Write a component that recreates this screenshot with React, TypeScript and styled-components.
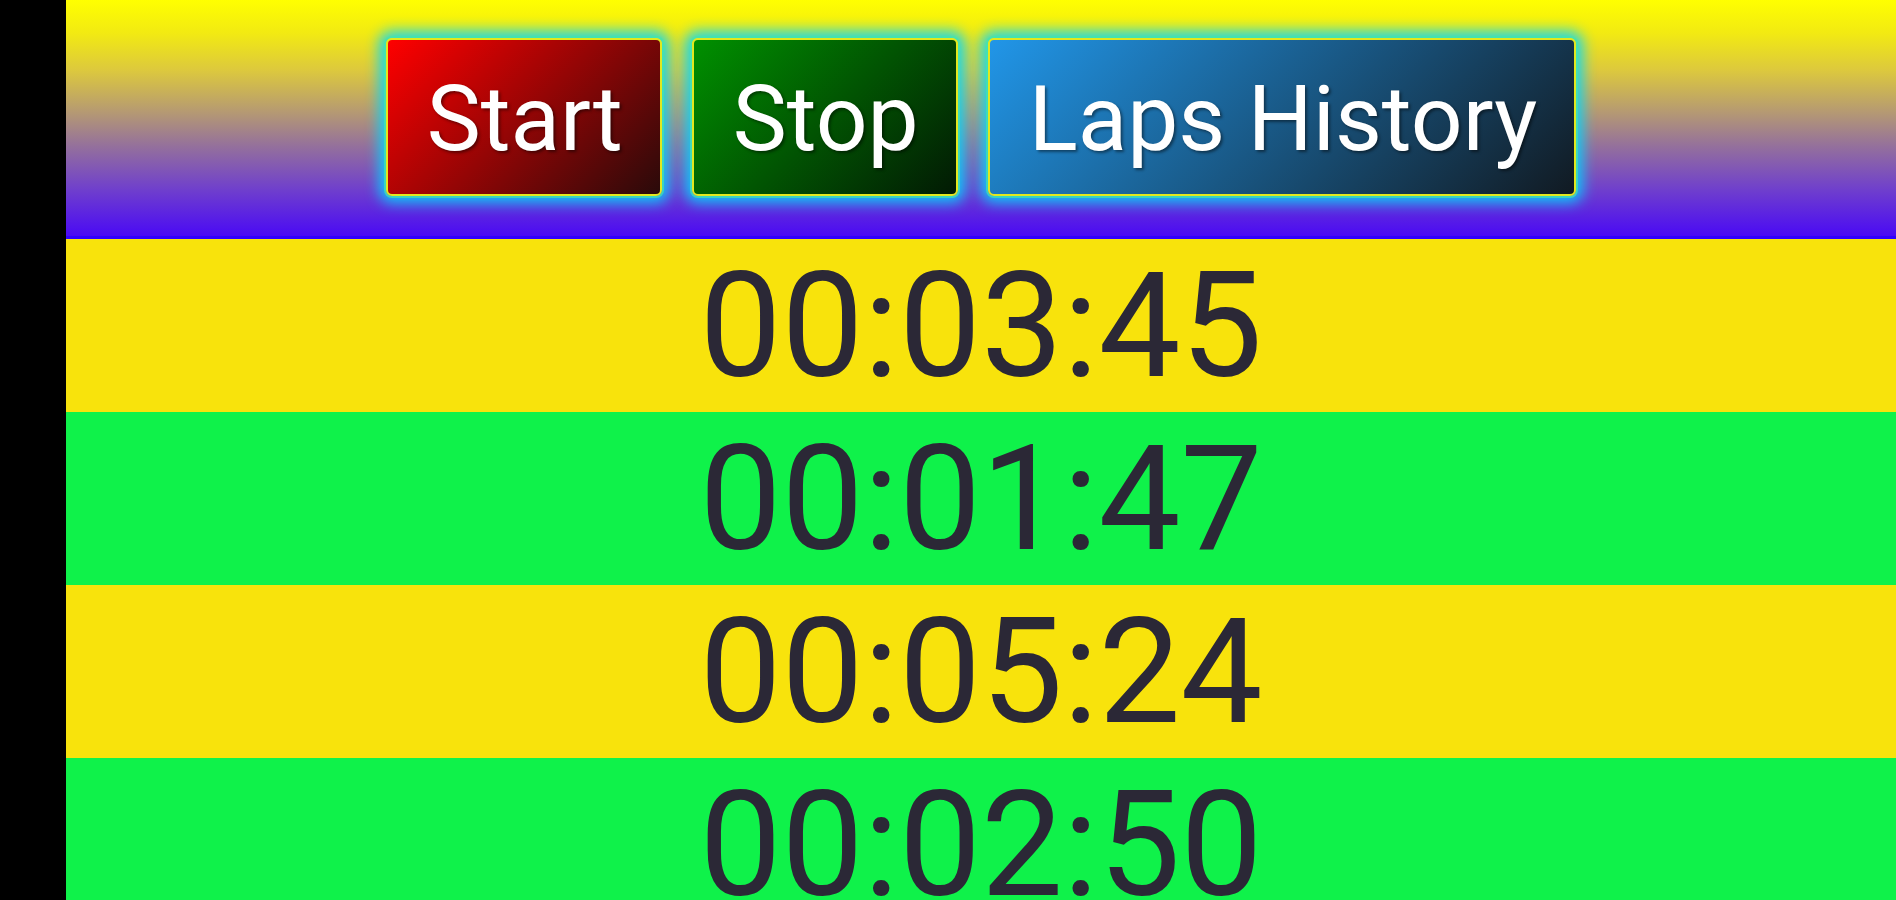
import { createGlobalStyle } from 'styled-components';
import styled from 'styled-components';

const GlobalStyle = createGlobalStyle`
	html, body {
		margin: 0;
		padding: 0;
		background: #000;
		overflow: hidden;
	}
	* {
		box-sizing: border-box;
	}
`;

const Screen = styled.div`
	display: flex;
	width: 1896px;
	height: 900px;
	background: #000;
	font-family: Roboto, 'Noto Sans', sans-serif;
`;

const Notch = styled.div`
	flex: 0 0 66px;
	background: #000;
`;

const Main = styled.div`
	flex: 1;
	display: flex;
	flex-direction: column;
	overflow: hidden;
`;

const Toolbar = styled.div`
	flex: 0 0 239px;
	display: flex;
	align-items: center;
	justify-content: center;
	gap: 30px;
	padding-bottom: 2px;
	background: linear-gradient(
		180deg,
		#ffff00 0%,
		#f2ea12 14%,
		#dcc83e 30%,
		#b49874 48%,
		#94709c 62%,
		#7040cc 80%,
		#4a0af4 100%
	);
	border-bottom: 3px solid #3000ff;
`;

const ActionButton = styled.button<{ $from: string; $to: string }>`
	height: 158px;
	padding: 0 37px 0 39px;
	border: 2px solid #e2e81e;
	border-radius: 6px;
	background: linear-gradient(135deg, ${({ $from }) => $from} 0%, ${({ $to }) => $to} 100%);
	box-shadow:
		0 0 0 2px rgba(70, 230, 170, 0.7),
		0 0 14px 7px rgba(0, 215, 255, 0.9);
	color: #fff;
	font-family: Roboto, 'Noto Sans', sans-serif;
	font-size: 91px;
	font-weight: 400;
	line-height: 1;
	padding-top: 4px;
	text-shadow: 2px 2px 3px rgba(0, 0, 0, 0.45);
	cursor: pointer;
`;

const LapRow = styled.div<{ $bg: string }>`
	flex: 0 0 173px;
	display: flex;
	align-items: center;
	justify-content: center;
	background: ${({ $bg }) => $bg};
	color: #2b2836;
	font-size: 146px;
	font-weight: 400;
	line-height: 1;
	padding-top: 2px;
`;

const LAPS = ['00:03:45', '00:01:47', '00:05:24', '00:02:50'];
const ROW_COLORS = ['#f8e30c', '#0ff24a'];

export default function App() {
	return (
		<>
			<GlobalStyle />
			<Screen>
				<Notch />
				<Main>
					<Toolbar>
						<ActionButton $from="#ff0000" $to="#2a0a0a">
							Start
						</ActionButton>
						<ActionButton $from="#009000" $to="#021a04">
							Stop
						</ActionButton>
						<ActionButton $from="#2196e8" $to="#111a22">
							Laps History
						</ActionButton>
					</Toolbar>
					{LAPS.map((lap, i) => (
						<LapRow key={lap} $bg={ROW_COLORS[i % 2]}>
							{lap}
						</LapRow>
					))}
				</Main>
			</Screen>
		</>
	);
}
